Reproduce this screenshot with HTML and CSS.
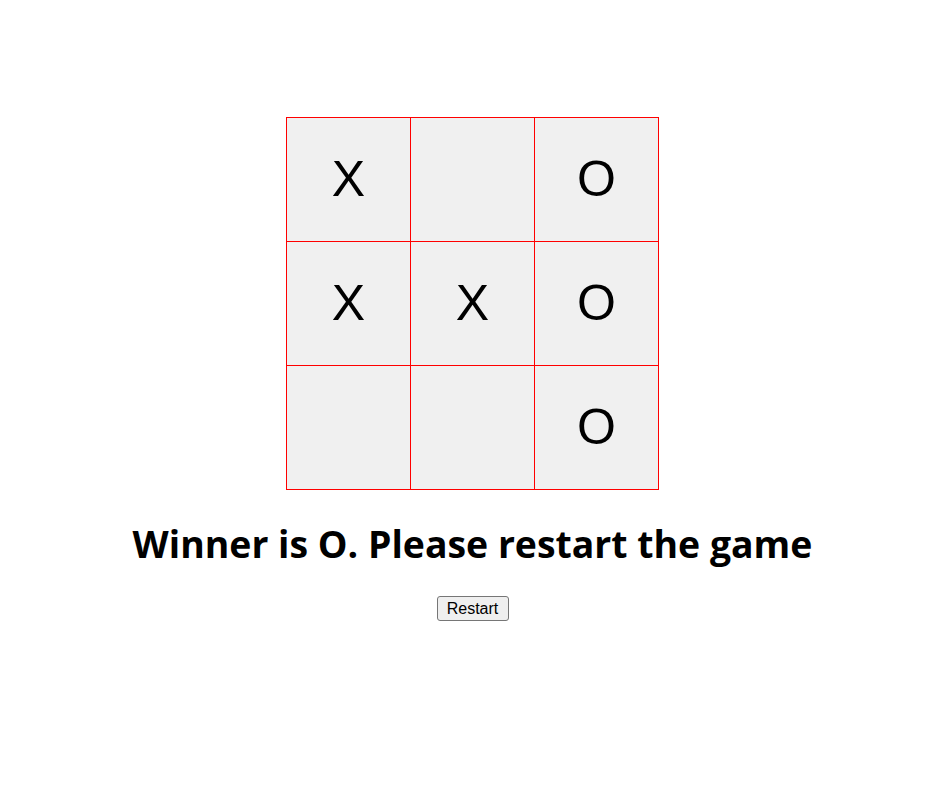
FILE: index.html
```html
<!DOCTYPE html>
<html>
<head>
<meta charset="utf-8">
<link rel="stylesheet" href="styles.css">
</head>
<body>
<div class="app">
  <div class="board">
    <div class="cell">X</div>
    <div class="cell"></div>
    <div class="cell">O</div>
    <div class="cell">X</div>
    <div class="cell">X</div>
    <div class="cell">O</div>
    <div class="cell"></div>
    <div class="cell"></div>
    <div class="cell">O</div>
  </div>
  <h1 class="status">Winner is O. Please restart the game</h1>
  <button class="restart">Restart</button>
</div>
</body>
</html>
```

FILE: styles.css
```css
html, body {
  margin: 0;
  padding: 0;
  background: #ffffff;
}
.app {
  display: flex;
  flex-direction: column;
  align-items: center;
  padding: 117px 3px 0 0;
  font-family: "Open Sans", "Noto Sans", sans-serif;
}
.board {
  display: grid;
  grid-template-columns: repeat(3, 124px);
  grid-template-rows: repeat(3, 124px);
  border-top: 1px solid #ff0000;
  border-left: 1px solid #ff0000;
}
.cell {
  background: #f0f0f0;
  border-right: 1px solid #ff0000;
  border-bottom: 1px solid #ff0000;
  display: flex;
  align-items: center;
  justify-content: center;
  font-family: "Liberation Sans", Arial, sans-serif;
  font-size: 50px;
  color: #000;
  padding-bottom: 1px;
  box-sizing: border-box;
}
.status {
  margin: 29px 0 0;
  font-size: 37.4px;
  line-height: 50px;
  font-weight: 700;
  color: #000;
}
.restart {
  margin-top: 27px;
  width: 72px;
  font-family: "Liberation Sans", Arial, sans-serif;
  font-size: 16px;
  line-height: 19px;
  padding: 2px 0;
  border: 1px solid #767676;
  border-radius: 3px;
  background: #efefef;
  color: #000;
  height: 25px;
  box-sizing: border-box;
}
```
